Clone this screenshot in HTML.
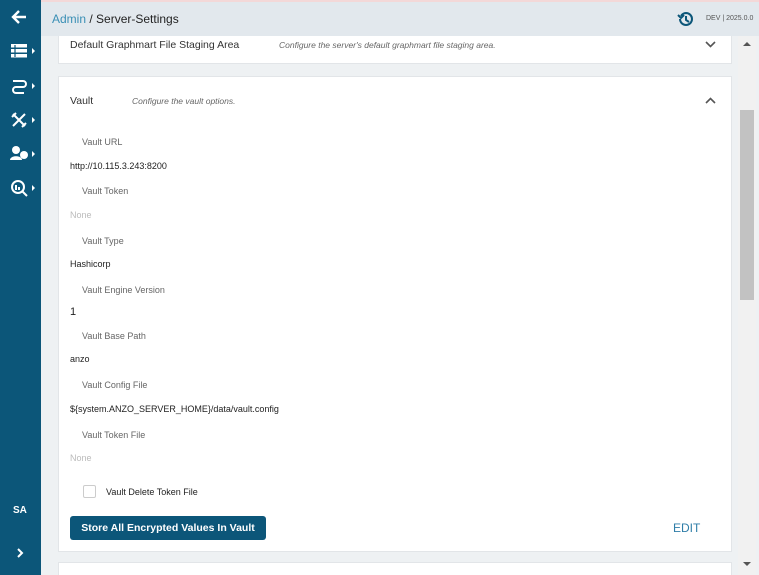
<!DOCTYPE html>
<html><head><style>
*{box-sizing:border-box;margin:0;padding:0}
html,body{width:759px;height:575px;overflow:hidden}
body{font-family:"Liberation Sans",sans-serif;background:#eef1f3;position:relative}
.side{position:absolute;left:0;top:0;width:41px;height:575px;background:#0c5679}
.top{position:absolute;left:41px;top:0;width:718px;height:36px;background:#e2e8ed;border-top:2px solid #f3d8d8}
.ic{position:absolute;color:#fff}
.car{position:absolute;left:32px;width:0;height:0;border-left:3px solid #fff;border-top:3px solid transparent;border-bottom:3px solid transparent}
.panel{position:absolute;background:#fff;border:1px solid #e2e5e8}
.lbl{position:absolute;font-size:9px;color:#666}
.val{position:absolute;font-size:9px;color:#222}
.none{position:absolute;font-size:9px;color:#bbb}
.sb{position:absolute;left:738px;top:36px;width:18px;height:539px;background:#f1f1f1}
.desc{position:absolute;font-size:8.5px;color:#666;font-style:italic}
</style></head><body>
<div class="side">
<svg class="ic" style="left:11px;top:10px" width="16" height="14" fill="none" stroke="#fff" stroke-width="2.4"><path d="M15 7H2M8 1L2 7l6 6"/></svg>
<svg class="ic" style="left:11px;top:44px" width="16" height="14"><rect x="0" y="0" width="16" height="3.5" fill="#fff"/><rect x="0" y="5" width="16" height="3.5" fill="#fff"/><rect x="0" y="10" width="16" height="3.5" fill="#fff"/><rect x="3" y="1" width="2" height="12" fill="#0c5679" opacity=".6"/></svg>
<div class="car" style="top:48px"></div>
<svg class="ic" style="left:11px;top:78px" width="16" height="16" fill="none" stroke="#fff" stroke-width="2"><path d="M2 3h10a3 3 0 010 6H5a3 3 0 000 6h8"/></svg>
<div class="car" style="top:83px"></div>
<svg class="ic" style="left:11px;top:112px" width="16" height="16" fill="none" stroke="#fff" stroke-width="2"><path d="M2 2l12 12M14 2L2 14M1 5l4-4M11 15l4-4"/></svg>
<div class="car" style="top:117px"></div>
<svg class="ic" style="left:10px;top:145px" width="18" height="16" fill="#fff"><circle cx="6" cy="5" r="4"/><path d="M0 15c0-5 12-5 12 0z"/><circle cx="14" cy="10" r="4"/></svg>
<div class="car" style="top:151px"></div>
<svg class="ic" style="left:10px;top:179px" width="18" height="18" fill="none" stroke="#fff" stroke-width="2"><circle cx="8" cy="8" r="6"/><path d="M12 12l5 5M6 6v5M9 8v3"/></svg>
<div class="car" style="top:185px"></div>
<div class="ic" style="left:13px;top:505px;font-size:10px;font-weight:bold">SA</div>
<svg class="ic" style="left:16px;top:548px" width="8" height="10" fill="none" stroke="#fff" stroke-width="2"><path d="M2 1l4 4-4 4"/></svg>
</div>
<div class="top">
<div style="position:absolute;left:11px;top:10px;font-size:12px;color:#222"><span style="color:#3a8fb5">Admin</span> / Server-Settings</div>
<svg style="position:absolute;left:635px;top:8px" width="18" height="18" fill="none" stroke="#0c5679" stroke-width="2"><path d="M4 9a6 6 0 106-6 6 6 0 00-5 3"/><path d="M2 5l3 3 3-3" /><path d="M10 6v4l3 2"/></svg>
<div style="position:absolute;left:665px;top:13px;font-size:7px;color:#555">DEV | 2025.0.0</div>
</div>
<div class="panel" style="left:58px;top:36px;width:674px;height:28px;border-top:none">
<div style="position:absolute;left:11px;top:3px;font-size:10.5px;color:#333">Default Graphmart File Staging Area</div>
<div class="desc" style="left:220px;top:4px">Configure the server's default graphmart file staging area.</div>
<svg style="position:absolute;left:646px;top:5px" width="11" height="7" fill="none" stroke="#555" stroke-width="1.6"><path d="M1 1l4.5 4.5L10 1"/></svg>
</div>
<div class="panel" style="left:58px;top:76px;width:674px;height:476px">
<div style="position:absolute;left:11px;top:18px;font-size:10.5px;color:#333">Vault</div>
<div class="desc" style="left:73px;top:19px">Configure the vault options.</div>
<svg style="position:absolute;left:646px;top:20px" width="11" height="7" fill="none" stroke="#555" stroke-width="1.6"><path d="M1 6l4.5-4.5L10 6"/></svg>
<div class="lbl" style="left:23px;top:60px">Vault URL</div>
<div class="val" style="left:11px;top:84px">http://10.115.3.243:8200</div>
<div class="lbl" style="left:23px;top:109px">Vault Token</div>
<div class="none" style="left:11px;top:133px">None</div>
<div class="lbl" style="left:23px;top:159px">Vault Type</div>
<div class="val" style="left:11px;top:182px">Hashicorp</div>
<div class="lbl" style="left:23px;top:208px">Vault Engine Version</div>
<div class="val" style="left:11px;top:229px;font-size:11px">1</div>
<div class="lbl" style="left:23px;top:254px">Vault Base Path</div>
<div class="val" style="left:11px;top:277px">anzo</div>
<div class="lbl" style="left:23px;top:303px">Vault Config File</div>
<div class="val" style="left:11px;top:327px">${system.ANZO_SERVER_HOME}/data/vault.config</div>
<div class="lbl" style="left:23px;top:353px">Vault Token File</div>
<div class="none" style="left:11px;top:376px">None</div>
<div style="position:absolute;left:24px;top:408px;width:13px;height:13px;border:1px solid #ccc;border-radius:2px"></div>
<div class="val" style="left:47px;top:410px">Vault Delete Token File</div>
<div style="position:absolute;left:11px;top:439px;width:196px;height:24px;background:#0c5679;border-radius:3px;color:#fff;font-size:10.5px;font-weight:bold;text-align:center;line-height:24px">Store All Encrypted Values In Vault</div>
<div style="position:absolute;left:614px;top:444px;font-size:12px;color:#2f7ea8">EDIT</div>
</div>
<div class="panel" style="left:58px;top:562px;width:674px;height:20px"></div>
<div class="sb"><div style="position:absolute;left:2px;top:74px;width:14px;height:190px;background:#c2c2c2"></div>
<div style="position:absolute;left:5px;top:6px;border-bottom:4px solid #555;border-left:4px solid transparent;border-right:4px solid transparent"></div>
<div style="position:absolute;left:5px;top:526px;border-top:4px solid #555;border-left:4px solid transparent;border-right:4px solid transparent"></div></div>
</body></html>
